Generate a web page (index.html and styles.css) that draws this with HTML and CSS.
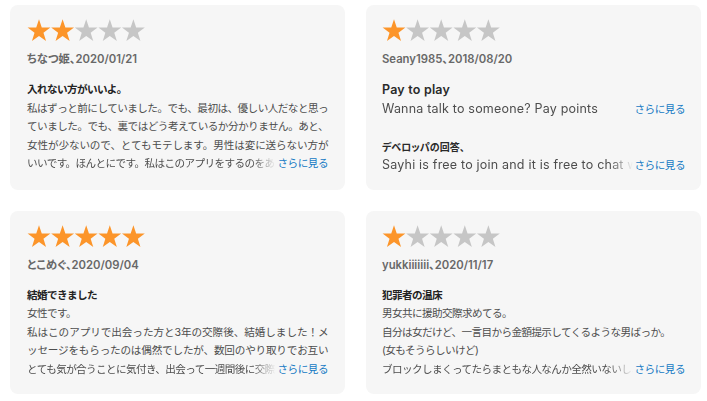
FILE: index.html
```html
<!DOCTYPE html>
<html lang="ja">
<head>
<meta charset="utf-8">
<link rel="stylesheet" href="styles.css">
</head>
<body>
<svg class="defs" width="0" height="0" aria-hidden="true">
  <symbol id="star" viewBox="0 0 24 23">
    <polygon points="12,0.2 14.76,8.4 23.41,8.49 16.47,13.65 19.05,21.91 12,16.9 4.95,21.91 7.53,13.65 0.59,8.49 9.24,8.4"/>
  </symbol>
</svg>
<main class="grid">
  <section class="card ja">
    <svg class="stars" viewBox="0 0 118 23" width="118" height="23">
      <use href="#star" x="0" width="24" height="23" class="on"/>
      <use href="#star" x="23.6" width="24" height="23" class="on"/>
      <use href="#star" x="47.2" width="24" height="23" class="off"/>
      <use href="#star" x="70.8" width="24" height="23" class="off"/>
      <use href="#star" x="94.4" width="24" height="23" class="off"/>
    </svg>
    <div class="author">ちなつ姫、2020/01/21</div>
    <div class="title">入れない方がいいよ。</div>
    <div class="line j">私はずっと前にしていました。でも、最初は、優しい人だなと思っ</div>
    <div class="line j">ていました。でも、裏ではどう考えているか分かりません。あと、</div>
    <div class="line j">女性が少ないので、とてもモテします。男性は変に送らない方が</div>
    <div class="line more"><span class="clip">いいです。ほんとにです。私はこのアプリをするのをあきらめました。</span><a class="link">さらに見る</a></div>
  </section>

  <section class="card en">
    <svg class="stars" viewBox="0 0 118 23" width="118" height="23">
      <use href="#star" x="0" width="24" height="23" class="on"/>
      <use href="#star" x="23.6" width="24" height="23" class="off"/>
      <use href="#star" x="47.2" width="24" height="23" class="off"/>
      <use href="#star" x="70.8" width="24" height="23" class="off"/>
      <use href="#star" x="94.4" width="24" height="23" class="off"/>
    </svg>
    <div class="author">Seany1985、2018/08/20</div>
    <div class="title">Pay to play</div>
    <div class="line more"><span class="clip">Wanna talk to someone? Pay points</span><a class="link">さらに見る</a></div>
    <div class="dev-title">デベロッパの回答、</div>
    <div class="line more"><span class="clip">Sayhi is free to join and it is free to chat with other users.</span><a class="link">さらに見る</a></div>
  </section>

  <section class="card ja">
    <svg class="stars" viewBox="0 0 118 23" width="118" height="23">
      <use href="#star" x="0" width="24" height="23" class="on"/>
      <use href="#star" x="23.6" width="24" height="23" class="on"/>
      <use href="#star" x="47.2" width="24" height="23" class="on"/>
      <use href="#star" x="70.8" width="24" height="23" class="on"/>
      <use href="#star" x="94.4" width="24" height="23" class="on"/>
    </svg>
    <div class="author">とこめぐ、2020/09/04</div>
    <div class="title">結婚できました</div>
    <div class="line">女性です。</div>
    <div class="line j">私はこのアプリで出会った方と3年の交際後、結婚しました！メ</div>
    <div class="line j">ッセージをもらったのは偶然でしたが、数回のやり取りでお互い</div>
    <div class="line more"><span class="clip">とても気が合うことに気付き、出会って一週間後に交際を始めました。</span><a class="link">さらに見る</a></div>
  </section>

  <section class="card ja">
    <svg class="stars" viewBox="0 0 118 23" width="118" height="23">
      <use href="#star" x="0" width="24" height="23" class="on"/>
      <use href="#star" x="23.6" width="24" height="23" class="off"/>
      <use href="#star" x="47.2" width="24" height="23" class="off"/>
      <use href="#star" x="70.8" width="24" height="23" class="off"/>
      <use href="#star" x="94.4" width="24" height="23" class="off"/>
    </svg>
    <div class="author">yukkiiiiiii、2020/11/17</div>
    <div class="title">犯罪者の温床</div>
    <div class="line">男女共に援助交際求めてる。</div>
    <div class="line">自分は女だけど、一言目から金額提示してくるような男ばっか。</div>
    <div class="line">(女もそうらしいけど)</div>
    <div class="line more"><span class="clip">ブロックしまくってたらまともな人なんか全然いないし、時間の無駄でした。</span><a class="link">さらに見る</a></div>
  </section>
</main>
</body>
</html>
```

FILE: styles.css
```css
html, body {
  margin: 0;
  padding: 0;
  background: #ffffff;
}

body {
  font-family: Inter, "Noto Sans CJK JP", sans-serif;
  color: #4a4a4a;
  padding: 5px 6px 0 10px;
}

.defs {
  position: absolute;
  width: 0;
  height: 0;
}

.grid {
  display: grid;
  grid-template-columns: 335px 335px;
  column-gap: 21px;
  row-gap: 21px;
}

.card {
  background: #f6f6f6;
  border-radius: 8px;
  padding: 14px 17px 14px 17px;
  display: flex;
  flex-direction: column;
  min-height: 155px;
}

.card.en {
  padding-left: 16px;
  padding-right: 16px;
}

.grid .card:nth-child(4) {
  padding-left: 16px;
  padding-right: 16px;
}

.stars {
  display: block;
  width: 118px;
  height: 23px;
}

.on { fill: #fc952a; }
.off { fill: #c6c6c6; }

.author {
  margin-top: 9px;
  font-size: 11.3px;
  line-height: 16px;
  font-weight: 600;
  color: #686868;
  font-feature-settings: "palt";
  white-space: nowrap;
}

.title {
  margin-top: 14px;
  font-size: 10.6px;
  line-height: 18.5px;
  font-weight: 700;
  color: #222;
  white-space: nowrap;
}

.line {
  font-size: 10.6px;
  line-height: 18.5px;
  white-space: nowrap;
  color: #4d4d4d;
}

.ja .line, .ja .title {
  letter-spacing: -0.6px;
}

.line.j {
  white-space: normal;
  text-align: justify;
  text-align-last: justify;
}

.en .title {
  font-size: 12.5px;
  font-weight: 600;
  color: #2a2a2a;
  letter-spacing: 0.2px;
}

.en .line {
  font-size: 12.5px;
  letter-spacing: 0.2px;
}

.dev-title {
  margin-top: 18.5px;
  font-size: 10px;
  line-height: 18.5px;
  font-weight: 700;
  color: #2a2a2a;
  font-feature-settings: "palt";
  white-space: nowrap;
}

.more {
  display: flex;
  align-items: baseline;
}

.clip {
  flex: 1;
  min-width: 0;
  overflow: hidden;
  -webkit-mask-image: linear-gradient(to right, #000 calc(100% - 24px), transparent);
  mask-image: linear-gradient(to right, #000 calc(100% - 24px), transparent);
}

.link {
  flex: none;
  margin-left: 2px;
  font-size: 10.6px;
  letter-spacing: -0.5px;
  color: #1479c4;
  cursor: pointer;
}
```
